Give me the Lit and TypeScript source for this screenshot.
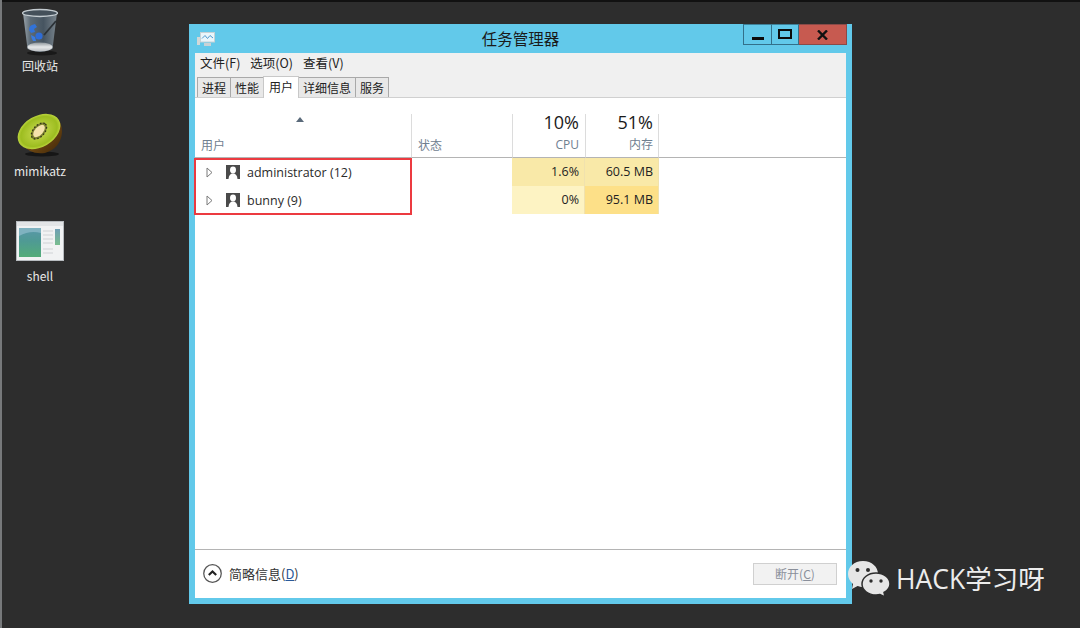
import { LitElement, html, css, svg } from "lit";
import { customElement } from "lit/decorators.js";

const trashIcon = svg`<svg class="pic" width="40" height="50" viewBox="0 0 40 50">
  <defs>
    <linearGradient id="bin" x1="0" x2="1" y1="0" y2="0">
      <stop offset="0" stop-color="#9aa4ab"/><stop offset=".22" stop-color="#5c6a75"/><stop offset=".6" stop-color="#465460"/><stop offset="1" stop-color="#79848c"/>
    </linearGradient>
    <linearGradient id="base" x1="0" x2="0" y1="0" y2="1">
      <stop offset="0" stop-color="#8f979c"/><stop offset=".5" stop-color="#e6e8e9"/><stop offset="1" stop-color="#b9bdc0"/>
    </linearGradient>
  </defs>
  <ellipse cx="22" cy="45" rx="15" ry="2.500" fill="#191919"/>
  <path d="M3 5 L7.500 41 Q20 47 32.500 41 L37 5 Z" fill="url(#bin)"/>
  <ellipse cx="20" cy="5" rx="17.500" ry="3.500" fill="#44505a" stroke="#c4ccd1" stroke-width="1.300"/>
  <path d="M24 27 L36 13" stroke="#2b3136" stroke-width="1.800"/>
  <ellipse cx="20" cy="39" rx="12.500" ry="4.500" fill="url(#base)"/>
  <path d="M9 22 q0-4 3-5 l3-1 l2 3 l-3 2 l1 3 l-4 1z" fill="#3273d8"/>
  <circle cx="19" cy="28" r="3.600" fill="#2f6cd6"/>
  <path d="M11 27 l4 2 l1 4 l-3 0 q-2-3-2-6z" fill="#3a7be0"/>
</svg>`;

const kiwiIcon = svg`<svg class="pic" width="46" height="46" viewBox="0 0 46 46">
  <defs>
    <radialGradient id="flesh" cx=".5" cy=".5" r=".5">
      <stop offset="0" stop-color="#d3dd6a"/><stop offset=".45" stop-color="#b3cc38"/><stop offset=".85" stop-color="#9dbd20"/><stop offset="1" stop-color="#bcd53e"/>
    </radialGradient>
    <linearGradient id="skin" x1="0" x2="1" y1="0" y2="1">
      <stop offset="0" stop-color="#a46f1c"/><stop offset="1" stop-color="#3f2508"/>
    </linearGradient>
  </defs>
  <ellipse cx="25" cy="41" rx="17" ry="2.500" fill="#161616"/>
  <path d="M5 31 Q13 42 28 40 Q44 35 45 19 Q45 8 37 3 L12 20 Z" fill="url(#skin)"/>
  <ellipse cx="22" cy="18.500" rx="23" ry="15.500" transform="rotate(-30 22 18.500)" fill="url(#flesh)"/>
  <ellipse cx="22" cy="18" rx="10" ry="6" transform="rotate(-48 22 18)" fill="#7d8330"/>
  <ellipse cx="22" cy="18" rx="9.500" ry="5.600" transform="rotate(-48 22 18)" fill="none" stroke="#33331a" stroke-width="1.300" stroke-dasharray="1.500 2"/>
  <ellipse cx="22" cy="18" rx="7.500" ry="4" transform="rotate(-48 22 18)" fill="#f4e2ac"/>
</svg>`;

const shellIcon = svg`<svg class="pic" width="48" height="40" viewBox="0 0 48 40">
  <defs>
    <linearGradient id="pane" x1="0" x2="0" y1="0" y2="1">
      <stop offset="0" stop-color="#5a97aa"/><stop offset=".45" stop-color="#4f9a94"/><stop offset="1" stop-color="#53ac78"/>
    </linearGradient>
    <linearGradient id="side" x1="0" x2="0" y1="0" y2="1">
      <stop offset="0" stop-color="#6f9fb5"/><stop offset="1" stop-color="#79bd8e"/>
    </linearGradient>
  </defs>
  <rect width="48" height="40" fill="#b8bcc0"/>
  <rect x="1" y="1" width="46" height="38" fill="#f1f2f3"/>
  <rect x="1" y="1" width="46" height="4" fill="#e2e4e6"/>
  <rect x="3" y="7" width="22" height="29" fill="url(#pane)"/>
  <path d="M3 15 Q14 9 25 12 L25 7 L3 7 Z" fill="#7fb2c0"/>
  <rect x="39" y="8" width="5" height="16" fill="url(#side)"/>
  <path d="M27 10h10M27 14h10M27 18h10M27 22h10M27 28h10M27 32h10" stroke="#e0e2e4" stroke-width="2"/>
</svg>`;

const userIcon = svg`<svg width="14" height="14" viewBox="0 0 14 14">
  <rect width="14" height="14" fill="#4a4a4a"/>
  <ellipse cx="7" cy="5" rx="3" ry="3.400" fill="#fff"/>
  <path d="M2.500 14 Q3 8.500 7 8.500 Q11 8.500 11.500 14 Z" fill="#fff"/>
</svg>`;

const expander = svg`<svg width="7" height="11" viewBox="0 0 7 11">
  <path d="M1 1 L6 5.500 L1 10 Z" fill="#fff" stroke="#7a7a7a"/>
</svg>`;

const appIcon = svg`<svg class="pic" width="18" height="15" viewBox="0 0 18 15">
  <rect x="3.500" y=".500" width="14" height="9.500" fill="#eaf6fb" stroke="#c6d2d6"/>
  <path d="M5 6.500 L8 3.500 L10.500 6.500 L13 3.500 L16 6" fill="none" stroke="#4f9ad0"/>
  <rect x="0" y="5" width="3" height="8" fill="#d2d8d8"/>
  <path d="M7 11h7v3H7z" fill="#c8d2d6"/>
</svg>`;

const wechatLogo = svg`<svg width="44" height="38" viewBox="0 0 44 38">
  <path d="M16 1 C7 1 1 7 1 14 C1 18 3 21.500 6 24 L5 29 L10.500 26 C12 26.500 14 27 16 27 C25 27 31 21 31 14 C31 7 25 1 16 1 Z" fill="#e6e6e6"/>
  <circle cx="10.500" cy="10" r="2" fill="#2d2d2d"/>
  <circle cx="21" cy="10" r="2" fill="#2d2d2d"/>
  <path d="M29 13 C21 13 15 18 15 24 C15 30 21 35 29 35 C30.500 35 32 34.800 33 34.500 L38 37 L37 32.500 C40.500 30.500 43 27.500 43 24 C43 18 37 13 29 13 Z" fill="#e6e6e6" stroke="#2d2d2d" stroke-width="1.500"/>
  <circle cx="24" cy="21" r="1.700" fill="#2d2d2d"/>
  <circle cx="34" cy="21" r="1.700" fill="#2d2d2d"/>
</svg>`;

@customElement("app-root")
export class AppRoot extends LitElement {
  static styles = css`
    :host {
      display: block;
      position: relative;
      width: 1080px;
      height: 628px;
      overflow: hidden;
      background: #2d2d2d;
      font-family: "Noto Sans CJK SC", "Open Sans", sans-serif;
      font-size: 12px;
      color: #222;
    }
    .pic {
      filter: blur(0.45px);
    }
    .top-edge {
      position: absolute;
      left: 0;
      top: 0;
      width: 100%;
      height: 2px;
      background: #111;
    }
    .left-edge {
      position: absolute;
      left: 0;
      top: 0;
      width: 2px;
      height: 100%;
      background: #77797b;
    }

    .desk-icon {
      position: absolute;
      width: 80px;
      display: flex;
      flex-direction: column;
      align-items: center;
      color: #e8e8e8;
      font-size: 12px;
      line-height: 16px;
    }

    .window {
      position: absolute;
      left: 189px;
      top: 24px;
      width: 663px;
      height: 580px;
      box-sizing: border-box;
      background: #62c9ea;
      padding: 0 6px 6px;
      display: flex;
      flex-direction: column;
    }
    .titlebar {
      height: 29px;
      flex: none;
      display: flex;
      align-items: flex-start;
      position: relative;
    }
    .app-icon {
      margin: 8px 0 0 2px;
    }
    .title {
      position: absolute;
      left: 0;
      right: 0;
      top: 3px;
      text-align: center;
      font-size: 15.500px;
      line-height: 22px;
      color: #1a1a1a;
    }
    .controls {
      margin-left: auto;
      margin-right: -1px;
      display: flex;
      height: 21px;
      position: relative;
    }
    .ctl {
      box-sizing: border-box;
      height: 21px;
      border: 1px solid #33708a;
      border-top-color: #3d8199;
      display: flex;
      align-items: center;
      justify-content: center;
    }
    .ctl + .ctl {
      border-left: none;
    }
    .ctl.min {
      width: 29px;
    }
    .ctl.max {
      width: 27px;
    }
    .ctl.close {
      width: 48px;
      background: #c75a50;
      border-color: #8a4a48;
    }
    .min-glyph {
      width: 12px;
      height: 3px;
      background: #0c0c0c;
      margin-top: 7px;
    }
    .max-glyph {
      width: 14px;
      height: 10px;
      box-sizing: border-box;
      border: 2.500px solid #0c0c0c;
      margin-top: -2px;
    }

    .client {
      flex: 1;
      min-height: 0;
      background: #fff;
      display: flex;
      flex-direction: column;
    }
    .menu {
      height: 20px;
      flex: none;
      background: #f0f0f0;
      display: flex;
      gap: 10px;
      padding-left: 5px;
      font-size: 12.500px;
      line-height: 20px;
      color: #222;
    }
    .tabstrip {
      height: 25px;
      flex: none;
      box-sizing: border-box;
      background: #f0f0f0;
      border-bottom: 1px solid #d0d0d0;
      padding: 4px 0 0 2px;
      display: flex;
      align-items: flex-end;
      font-size: 12px;
    }
    .tab {
      box-sizing: border-box;
      height: 20px;
      padding: 0 4px;
      line-height: 19px;
      background: #e8e8e8;
      border: 1px solid #a9a9a9;
      border-bottom: none;
      margin-right: -1px;
      color: #222;
    }
    .tab.active {
      height: 22px;
      background: #fff;
      border-color: #c8c8c8;
      padding: 0 5px;
      line-height: 19px;
      margin-bottom: -1px;
      position: relative;
      z-index: 1;
    }

    .grid {
      display: grid;
      grid-template-columns: 217px 100px 73px 74px 1fr;
      flex: none;
    }
    .head {
      box-sizing: border-box;
      margin-top: 16px;
      height: 44px;
      border-bottom: 1px solid #b4b4b4;
      display: flex;
      flex-direction: column;
      justify-content: flex-end;
      color: #6f8090;
      font-size: 12px;
      line-height: 16px;
      padding-bottom: 4px;
    }
    .head.user {
      padding-left: 6px;
      border-right: 1px solid #dcdcdc;
      position: relative;
    }
    .sort {
      position: absolute;
      left: 101px;
      top: 3px;
      width: 0;
      height: 0;
      border-left: 4px solid transparent;
      border-right: 4px solid transparent;
      border-bottom: 5px solid #5a6a7a;
    }
    .head.status {
      padding-left: 6px;
    }
    .head.metric {
      align-items: flex-end;
      padding-right: 6px;
      border-left: 1px solid #dcdcdc;
    }
    .head.metric.last {
      padding-right: 5px;
      border-right: 1px solid #dcdcdc;
    }
    .pct {
      font-size: 18px;
      line-height: 24px;
      color: #1a1a1a;
      font-family: "Open Sans", sans-serif;
      margin-bottom: 3px;
    }
    .metric-label {
      font-family: "Open Sans", "Noto Sans CJK SC", sans-serif;
    }
    .rows {
      grid-column: 1 / -1;
      display: grid;
      grid-template-columns: subgrid;
      grid-auto-rows: 28px;
      position: relative;
    }
    .name {
      display: flex;
      align-items: center;
      padding-left: 11px;
      font-family: "Open Sans", sans-serif;
      font-size: 12.500px;
      color: #2a2a2a;
    }
    .name .user-icon {
      display: flex;
      margin-left: 13px;
      margin-right: 7px;
    }
    .name .exp {
      display: flex;
    }
    .cell {
      box-sizing: border-box;
      text-align: right;
      padding-right: 5px;
      line-height: 28px;
      font-family: "Open Sans", sans-serif;
      font-size: 12.500px;
      color: #222;
      border-right: 1px solid #f0e2ae;
    }
    .red-box {
      position: absolute;
      left: -1px;
      top: 0;
      width: 218px;
      height: 57px;
      box-sizing: border-box;
      border: 2px solid #ec3a40;
      pointer-events: none;
    }

    .spacer {
      flex: 1;
    }
    .footer {
      height: 49px;
      flex: none;
      box-sizing: border-box;
      border-top: 1px solid #b4b4b4;
      display: flex;
      align-items: center;
      padding: 0 9px 1px 8px;
    }
    .collapse {
      width: 19px;
      height: 19px;
      flex: none;
      margin-right: 7px;
    }
    .brief {
      font-size: 13px;
      color: #333;
    }
    .brief u {
      color: #2a5a9a;
    }
    .disconnect {
      margin-left: auto;
      box-sizing: border-box;
      width: 84px;
      height: 22px;
      border: 1px solid #d0d0d0;
      background: #f2f2f2;
      color: #8a8f9a;
      font-size: 12px;
      line-height: 20px;
      text-align: center;
    }

    .watermark {
      position: absolute;
      left: 847px;
      top: 559px;
      display: flex;
      align-items: center;
      gap: 5px;
      color: #ececec;
      font-size: 26.500px;
      line-height: 40px;
      font-family: "Open Sans", "Noto Sans CJK SC", sans-serif;
      white-space: nowrap;
    }
  `;

  private desktopIcon(x: number, y: number, gap: number, icon: unknown, label: string) {
    return html`<div class="desk-icon" style="left:${x}px;top:${y}px;gap:${gap}px">${icon}<span>${label}</span></div>`;
  }

  render() {
    const rows = [
      { name: "administrator (12)", cpu: "1.6%", cpuBg: "#f9e9a8", mem: "60.5 MB", memBg: "#f9e9a8" },
      { name: "bunny (9)", cpu: "0%", cpuBg: "#fdf3c3", mem: "95.1 MB", memBg: "#fde088" },
    ];
    return html`
      <div class="top-edge"></div>
      <div class="left-edge"></div>
      ${this.desktopIcon(0, 8, 0, trashIcon, "回收站")}
      ${this.desktopIcon(0, 113, 4, kiwiIcon, "mimikatz")}
      ${this.desktopIcon(0, 221, 7, shellIcon, "shell")}

      <div class="window">
        <div class="titlebar">
          <span class="app-icon">${appIcon}</span>
          <div class="title">任务管理器</div>
          <div class="controls">
            <div class="ctl min"><span class="min-glyph"></span></div>
            <div class="ctl max"><span class="max-glyph"></span></div>
            <div class="ctl close">
              <svg width="11" height="10" viewBox="0 0 11 10"><path d="M1 .500 L10 9.500 M10 .500 L1 9.500" stroke="#111" stroke-width="2.400"/></svg>
            </div>
          </div>
        </div>
        <div class="client">
          <div class="menu"><span>文件(F)</span><span>选项(O)</span><span>查看(V)</span></div>
          <div class="tabstrip">
            <span class="tab">进程</span>
            <span class="tab">性能</span>
            <span class="tab active">用户</span>
            <span class="tab">详细信息</span>
            <span class="tab">服务</span>
          </div>
          <div class="grid">
            <div class="head user"><span class="sort"></span>用户</div>
            <div class="head status">状态</div>
            <div class="head metric"><span class="pct">10%</span><span class="metric-label">CPU</span></div>
            <div class="head metric last"><span class="pct">51%</span><span class="metric-label">内存</span></div>
            <div class="head"></div>
            <div class="rows">
              ${rows.map(
                (r) => html`
                  <div class="name"><span class="exp">${expander}</span><span class="user-icon">${userIcon}</span>${r.name}</div>
                  <div></div>
                  <div class="cell" style="background:${r.cpuBg}">${r.cpu}</div>
                  <div class="cell" style="background:${r.memBg}">${r.mem}</div>
                  <div></div>
                `
              )}
              <div class="red-box"></div>
            </div>
          </div>
          <div class="spacer"></div>
          <div class="footer">
            <svg class="collapse" viewBox="0 0 18 18">
              <circle cx="9" cy="9" r="8.300" fill="#fff" stroke="#555" stroke-width="1.200"/>
              <path d="M5.500 10.500 L9 7 L12.500 10.500" fill="none" stroke="#222" stroke-width="2"/>
            </svg>
            <span class="brief">简略信息(<u>D</u>)</span>
            <div class="disconnect">断开(<u>C</u>)</div>
          </div>
        </div>
      </div>

      <div class="watermark">${wechatLogo}<span>HACK学习呀</span></div>
    `;
  }
}
